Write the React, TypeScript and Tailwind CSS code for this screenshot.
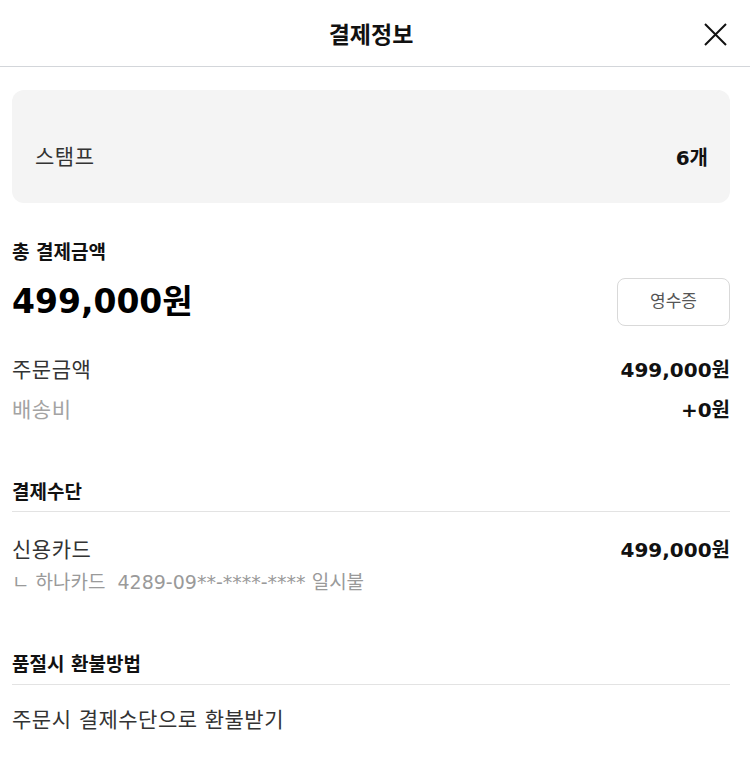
import React from 'react';

const font = "font-['DejaVu_Sans','Noto_Sans_CJK_KR',sans-serif]";

function Row({ label, value, muted }: { label: string; value: string; muted?: boolean }) {
  return (
    <div className="flex items-center justify-between leading-[28px]">
      <span className={`text-[21px] tracking-[0.5px] ${muted ? 'text-[#a3a3a3]' : 'text-[#333]'}`}>{label}</span>
      <span className="text-[20px] font-bold text-[#111]">{value}</span>
    </div>
  );
}

function SectionTitle({ children, pb = 'pb-[6px]' }: { children: React.ReactNode; pb?: string }) {
  return (
    <div className={`border-b border-[#e3e3e3] ${pb}`}>
      <h3 className="text-[19px] font-bold text-[#111] leading-[26px]">{children}</h3>
    </div>
  );
}

export default function App() {
  return (
    <div className={`w-[750px] h-[764px] bg-white ${font}`}>
      {/* Header */}
      <header className="relative h-[67px] flex items-center justify-center border-b border-[#d3d6da] pt-[4px] pr-[8px]">
        <h1 className="text-[23px] font-bold text-[#111]">결제정보</h1>
        <button className="absolute right-[23px] top-[23px] text-[#111]" aria-label="close">
          <svg width="23" height="23" viewBox="0 0 23 23" fill="none" stroke="currentColor" strokeWidth="2">
            <path d="M1 1L22 22M22 1L1 22" />
          </svg>
        </button>
      </header>

      <main className="pl-[12px] pr-[20px] pt-[23px]">
        {/* Stamp card */}
        <div className="h-[113px] rounded-[12px] bg-[#f4f4f4] flex items-center justify-between pl-[23px] pr-[22px] pt-[22px]">
          <span className="text-[21px] tracking-[0.5px] text-[#333]">스탬프</span>
          <span className="text-[20px] font-bold text-[#111]">6개</span>
        </div>

        {/* Total */}
        <section className="mt-[36px]">
          <h3 className="text-[19px] font-bold text-[#111] leading-[26px]">총 결제금액</h3>
          <div className="mt-[13px] h-[48px] flex items-center justify-between">
            <span className="text-[33px] font-bold text-black leading-[40px]">499,000원</span>
            <button className="w-[113px] h-[48px] rounded-[8px] border border-[#d9d9d9] text-[17px] text-[#555] bg-white">
              영수증
            </button>
          </div>
          <div className="mt-[30px] flex flex-col gap-[12px]">
            <Row label="주문금액" value="499,000원" />
            <Row label="배송비" value="+0원" muted />
          </div>
        </section>

        {/* Payment method */}
        <section className="mt-[55px]">
          <SectionTitle>결제수단</SectionTitle>
          <div className="mt-[24px]">
            <Row label="신용카드" value="499,000원" />
            <p className="mt-[5px] text-[19px] leading-[26px] text-[#9a9a9a]">ㄴ 하나카드&nbsp; 4289-09**-****-**** 일시불</p>
          </div>
        </section>

        {/* Refund */}
        <section className="mt-[56px]">
          <SectionTitle pb="pb-[7px]">품절시 환불방법</SectionTitle>
          <p className="mt-[21px] text-[21px] tracking-[0.5px] leading-[28px] text-[#333]">주문시 결제수단으로 환불받기</p>
        </section>
      </main>
    </div>
  );
}
